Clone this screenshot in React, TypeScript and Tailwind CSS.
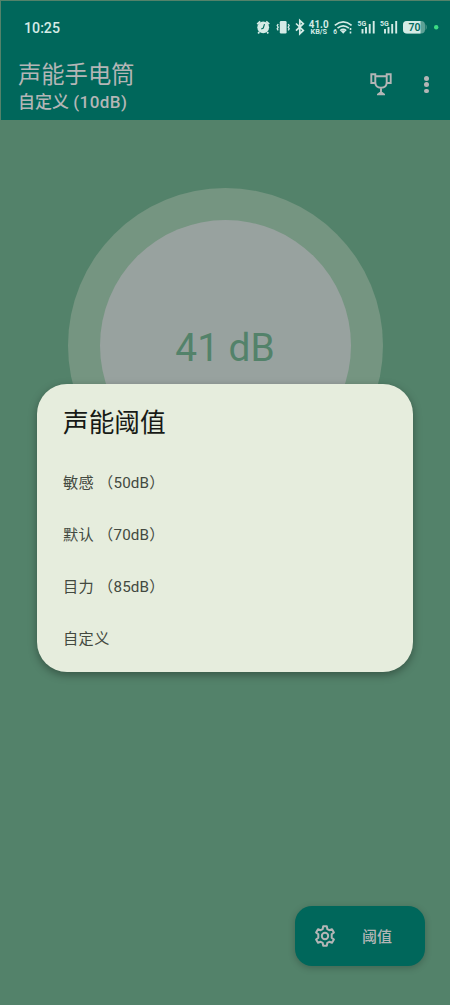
import React from "react";

function StatusIcons() {
  return (
    <svg width="190" height="24" viewBox="252 15 190 24" fill="none" stroke="#d5ebe6" strokeWidth="1.5" className="block">
      <circle cx="263.2" cy="27.3" r="5.9" fill="#d5ebe6" stroke="none" />
      <path d="M257.200 24.200l3-2.800M269.200 24.200l-3-2.800M259.200 32l-1 1.500M267.200 32l1 1.500" strokeWidth="1.8" />
      <path d="M264.500 24.200l-1.200 3.800l-2 1" stroke="#006a5d" strokeWidth="1.100" />
      <rect x="279.800" y="21" width="6.800" height="12.500" rx="1.200" fill="#d5ebe6" stroke="none" />
      <path d="M278.200 24l-1 1.600l1 1.600l-1 1.600l1 1.600M288.200 24l1 1.600l-1 1.600l1 1.600l-1 1.600" strokeWidth="1.300" />
      <path d="M296 23.500l7.300 7l-3.500 3.200v-13.200l3.500 3.200l-7.300 7" strokeWidth="1.700" />
      <g fill="#d5ebe6" stroke="none" className="font-['Roboto',sans-serif] font-bold">
        <text x="308.800" y="27.600" fontSize="10.500" textLength="19.800" lengthAdjust="spacingAndGlyphs">41.0</text>
        <text x="310.500" y="34" fontSize="6.800" textLength="16.500" lengthAdjust="spacingAndGlyphs">KB/S</text>
        <text x="333.300" y="33.500" fontSize="6.500">6</text>
        <text x="357.500" y="26" fontSize="7.500" textLength="8.700" lengthAdjust="spacingAndGlyphs">5G</text>
        <text x="380" y="26" fontSize="7.500" textLength="8.700" lengthAdjust="spacingAndGlyphs">5G</text>
      </g>
      <path d="M334.800 25.400q8.400-7 16.800 0M337.500 28.200q5.700-4.800 11.400 0M340.200 30.700q3-2.500 6 0" strokeWidth="1.700" />
      <path d="M340.900 31.200q2.300-1.700 4.600 0l-2.300 2.500z" fill="#d5ebe6" stroke="none" />
      <path d="M350.500 28v2M350.500 31.500v2" strokeWidth="1.600" />
      <path d="M362.500 29v4.500M366 27v6.500M369.700 24v9.500M373.700 21v12.500" strokeWidth="1.900" />
      <path d="M385 29v4.500M388.500 27v6.500M392.200 24v9.500M396.200 21v12.500" strokeWidth="1.900" />
      <rect x="403" y="21" width="22" height="12.500" rx="4" fill="#5da196" stroke="none" />
      <path d="M425.600 24q2.200 3.200 0 6.500z" fill="#5da196" stroke="none" />
      <path d="M407 21h13.500v12.500h-13.500q-4 0-4-4v-4.500q0-4 4-4z" fill="#d5ebe6" stroke="none" />
      <text x="408.500" y="31" fontSize="10.500" fill="#006a5d" stroke="none" className="font-['Roboto',sans-serif] font-semibold">70</text>
      <circle cx="436.200" cy="27.200" r="2.200" fill="#3ddc84" stroke="none" />
    </svg>
  );
}

function Trophy() {
  return (
    <svg width="24" height="26" viewBox="0 0 24 26" fill="none" stroke="#b4b6b6" strokeWidth="1.900" className="block">
      <path d="M6.300 4.200h11.400v6q0 5.500-5.700 5.500t-5.700-5.500zM6.300 4.200v-1.900h-4v8.700h4M17.700 4.200v-1.900h4v8.700h-4M12 15.700v5" />
      <path d="M8 23.300v-1.300l2.600-2h2.800l2.600 2v1.300z" fill="#b4b6b6" stroke="none" />
    </svg>
  );
}

function Gear() {
  return (
    <svg width="22" height="22" viewBox="0 0 22 22" fill="none" stroke="#b4b6b6" strokeWidth="2" strokeLinejoin="round" className="block">
      <path d="M9.200 1.200h3.600l.5 2.900l2 1.100l2.700-1l1.900 3.200l-2.200 1.900v3.400l2.200 1.900l-1.900 3.200l-2.700-1l-2 1.100l-.5 2.900h-3.600l-.5-2.900l-2-1.100l-2.700 1l-1.900-3.200l2.200-1.900v-3.400l-2.200-1.900l1.900-3.200l2.700 1l2-1.100z" />
      <circle cx="11" cy="11" r="3.200" />
    </svg>
  );
}

const options = [
  { name: "敏感", level: "50dB" },
  { name: "默认", level: "70dB" },
  { name: "目力", level: "85dB" },
  { name: "自定义", level: null },
];

export default function App() {
  return (
    <div className="relative h-[1005px] w-[450px] overflow-hidden bg-[#53826a] font-['Roboto','Noto_Sans_CJK_SC',sans-serif]">
      <header className="h-[120px] bg-[#00675b] text-[#b4b6b6]">
        <div className="flex h-[54px] items-start justify-between pt-[15px] pr-2 pl-6">
          <span className="pt-px text-[14.200px] leading-6 font-medium text-[#d5ebe6]">10:25</span>
          <StatusIcons />
        </div>
        <div className="flex h-[66px] justify-between pl-[18px]">
          <div className="pt-[7px]">
            <h1 className="text-[23.300px] leading-[29px] font-normal whitespace-nowrap">声能手电筒</h1>
            <p className="text-[17px] leading-[24px] font-medium whitespace-nowrap">
              自定义 <span className="tracking-[0.450px]">(10dB)</span>
            </p>
          </div>
          <div className="flex gap-[31px] pt-[18px] pr-[21px]">
            <Trophy />
            <div className="flex flex-col items-center gap-[1.800px] pt-[4px]">
              <i className="size-[4.600px] rounded-full bg-[#b4b6b6]" />
              <i className="size-[4.600px] rounded-full bg-[#b4b6b6]" />
              <i className="size-[4.600px] rounded-full bg-[#b4b6b6]" />
            </div>
          </div>
        </div>
      </header>
      <main className="flex justify-center pt-[68px]">
        <div className="flex size-[315px] items-center justify-center rounded-full bg-[#759581]">
          <div className="flex size-[251px] items-center justify-center rounded-full bg-[#98a29f]">
            <span className="pt-[5px] text-[38.800px] leading-none text-[#53826a]">41 dB</span>
          </div>
        </div>
      </main>
      <button className="absolute top-[906px] left-[295px] flex h-[60px] w-[130px] items-center rounded-[17px] bg-[#00675b] pl-[19px] text-[#b4b6b6] shadow-[0_2px_7px_rgba(0,0,0,0.22)]">
        <Gear />
        <span className="ml-[26px] pt-[2px] text-[15px] leading-5 font-medium">阈值</span>
      </button>
      <section className="absolute top-[384px] left-[37px] h-[288px] w-[376px] rounded-[30px] bg-[#e6eddd] px-[26px] pt-[21px] shadow-[0_3px_8px_rgba(0,0,0,0.35)]">
        <h2 className="text-[25.700px] leading-9 font-normal text-[#171a16]">声能阈值</h2>
        <ul className="pt-[16px]">
          {options.map(({ name, level }) => (
            <li key={name} className="flex h-[52px] items-center text-[15.200px] tracking-[0.400px] whitespace-pre text-[#434940]">
              {name}
              {level && (
                <span className="tracking-[0.150px]">
                  {" （"}
                  {level}
                  {"）"}
                </span>
              )}
            </li>
          ))}
        </ul>
      </section>
      <div className="pointer-events-none absolute inset-0 border-t border-l border-[#53826a]" />
    </div>
  );
}
